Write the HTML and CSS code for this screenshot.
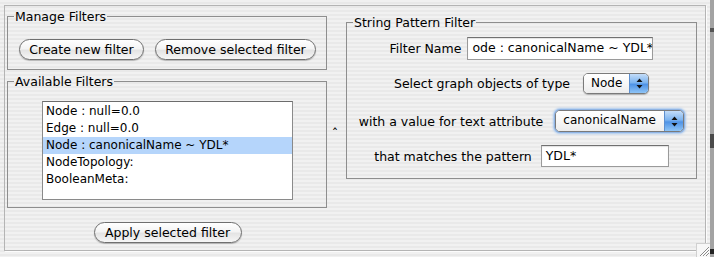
FILE: index.html
```html
<!DOCTYPE html>
<html lang="en">
<head>
  <meta charset="UTF-8">
  <title>Filters</title>
  <link rel="stylesheet" href="styles.css">
</head>
<body>

  <div class="frame">
    <div class="esquerda">
      <fieldset class="grupo grupo-manage">
        <legend>Manage Filters</legend>
        <div class="botoes">
          <button class="pilula">Create new filter</button>
          <button class="pilula">Remove selected filter</button>
        </div>
      </fieldset>

      <fieldset class="grupo grupo-lista">
        <legend>Available Filters</legend>
        <ul class="lista">
          <li>Node : null=0.0</li>
          <li>Edge : null=0.0</li>
          <li class="selecionado">Node : canonicalName ~ YDL*</li>
          <li>NodeTopology:</li>
          <li>BooleanMeta:</li>
        </ul>
      </fieldset>

      <button class="pilula aplicar">Apply selected filter</button>
    </div>

    <div class="divisor"><span class="seta">&#710;</span></div>

    <div class="direita">
      <fieldset class="grupo grupo-padrao">
        <legend>String Pattern Filter</legend>
        <div class="linha linha-nome">
          <span>Filter Name</span>
          <div class="campo campo-nome">ode : canonicalName ~ YDL*</div>
        </div>
        <div class="linha linha-tipo">
          <span>Select graph objects of type</span>
          <div class="combo combo-tipo">
            <span class="combo-texto">Node</span>
            <span class="combo-setas">
              <svg width="7" height="11" viewBox="0 0 7 11"><path d="M3.5 0.5 L6.5 4 L0.5 4 Z M0.5 7 L6.5 7 L3.5 10.5 Z" fill="#111"/></svg>
            </span>
          </div>
        </div>
        <div class="linha linha-atributo">
          <span>with a value for text attribute</span>
          <div class="combo combo-atributo">
            <span class="combo-texto">canonicalName</span>
            <span class="combo-setas">
              <svg width="7" height="11" viewBox="0 0 7 11"><path d="M3.5 0.5 L6.5 4 L0.5 4 Z M0.5 7 L6.5 7 L3.5 10.5 Z" fill="#111"/></svg>
            </span>
          </div>
        </div>
        <div class="linha linha-padrao">
          <span>that matches the pattern</span>
          <div class="campo campo-padrao">YDL*</div>
        </div>
      </fieldset>
    </div>

    <div class="alca">
      <svg width="13" height="13" viewBox="0 0 13 13">
        <path d="M12 3 L3 12 M12 6 L6 12 M12 9 L9 12" stroke="#8a8a8a" stroke-width="1"/>
        <path d="M12 4 L4 12 M12 7 L7 12 M12 10 L10 12" stroke="#fff" stroke-width="1"/>
      </svg>
    </div>
  </div>

  <div class="faixa"></div>

</body>
</html>
```

FILE: styles.css
```css
body {
  margin: 0;
  width: 714px;
  height: 257px;
  display: flex;
  font-family: "DejaVu Sans", "Lucida Grande", sans-serif;
  font-size: 12px;
  color: #000;
  background: repeating-linear-gradient(to bottom, #f1f1f1 0 2px, #e9e9e9 2px 4px);
  overflow: hidden;
}

.frame {
  position: relative;
  flex: 1;
  display: flex;
  margin: 5px 4px 6px 4px;
  border: 1px solid #b4b4b4;
  box-shadow: 1px 1px 0 #fcfcfc;
}

.faixa {
  width: 4px;
  background: linear-gradient(to bottom, #a3a3a3 0 28px, #555 28px 32px, #a3a3a3 32px 134px, #4a4a4a 134px 148px, #a3a3a3 148px 249px, #222 249px 254px, #a3a3a3 254px);
}

/* grupos com titulo */
.grupo {
  margin: 0;
  padding: 0;
  border: 1px solid #8e8e8e;
  min-width: 0;
}

.grupo legend {
  margin-left: 6px;
  padding: 0 1px;
  line-height: 15px;
  font-size: 12.5px;
}

.esquerda {
  width: 320px;
  margin-left: 2px;
  display: flex;
  flex-direction: column;
  align-items: stretch;
}

.grupo-manage {
  margin-top: 3px;
  padding: 15px 0 9px;
}

.botoes {
  display: flex;
  justify-content: center;
  gap: 11px;
  padding-left: 1px;
}

.pilula {
  height: 21px;
  padding: 0;
  font-family: inherit;
  font-size: 12.5px;
  white-space: nowrap;
  color: #000;
  border: 1px solid #6f6f6f;
  border-radius: 11px;
  background: linear-gradient(to bottom, #ffffff 0%, #f4f4f4 45%, #e4e4e4 55%, #f6f6f6 100%);
  box-shadow: 0 1px 1px rgba(0, 0, 0, 0.25);
  line-height: 19px;
}

.grupo-manage .pilula:first-child {
  width: 125px;
}

.grupo-manage .pilula:last-child {
  width: 161px;
}

.grupo-lista {
  margin-top: 4px;
  padding: 12px 0 7px;
}

.lista {
  list-style: none;
  margin: 0 0 0 34px;
  padding: 1px 0 0;
  width: 249px;
  height: 96px;
  background: #fff;
  border: 1px solid #8a8a8a;
  border-top-color: #6c6c6c;
}

.lista li {
  height: 17px;
  line-height: 17px;
  padding-left: 3px;
  white-space: nowrap;
}

.lista .selecionado {
  background: #b5d5fb;
}

.aplicar {
  align-self: center;
  width: 148px;
  margin-top: 14px;
  margin-left: 1px;
}

.divisor {
  width: 19px;
  display: flex;
  align-items: center;
  justify-content: center;
}

.seta {
  font-size: 13px;
  line-height: 8px;
  height: 6px;
  margin-top: 10px;
  margin-left: -3px;
}

.direita {
  width: 351px;
}

.grupo-padrao {
  margin-top: 9px;
  padding: 7px 0 11px;
  display: flex;
  flex-direction: column;
  align-items: center;
}

.linha {
  display: flex;
  align-items: center;
  white-space: nowrap;
  font-size: 12.5px;
}

.linha-nome {
  gap: 6px;
  height: 23px;
}

.linha-tipo {
  gap: 13px;
  height: 21px;
  margin-top: 13px;
}

.linha-atributo {
  gap: 12px;
  height: 22px;
  margin-top: 16px;
}

.linha-padrao {
  gap: 9px;
  height: 22px;
  margin-top: 13px;
}

.campo {
  box-sizing: border-box;
  height: 100%;
  background: #fff;
  border: 1px solid #9a9a9a;
  border-top-color: #707070;
  box-shadow: inset 0 1px 1px rgba(0, 0, 0, 0.12);
  padding-left: 4px;
  line-height: 20px;
  overflow: hidden;
}

.campo-nome {
  width: 186px;
}

.campo-padrao {
  width: 128px;
}

.combo {
  box-sizing: border-box;
  height: 100%;
  display: flex;
  background: #fff;
  border: 1px solid #7a7a7a;
  border-radius: 5px;
  overflow: hidden;
  box-shadow: 0 1px 1px rgba(0, 0, 0, 0.25);
}

.combo-atributo {
  box-shadow: 0 0 0 1px #8fb4e4, 0 0 2px 2px #a9c8ee;
}

.combo-texto {
  flex: 1;
  padding-left: 7px;
  font-size: 12px;
  line-height: 19px;
  background: linear-gradient(to bottom, #ffffff 0%, #f7f7f7 50%, #ececec 100%);
}

.combo-setas {
  width: 18px;
  border-left: 1px solid #5d8fcf;
  display: flex;
  align-items: center;
  justify-content: center;
  background: linear-gradient(to bottom, #c3dcf8 0%, #7db4ef 45%, #4f93e6 55%, #8ec4f6 100%);
}

.combo-tipo {
  width: 66px;
}

.combo-atributo {
  width: 129px;
}

.alca {
  position: absolute;
  right: -5px;
  bottom: -7px;
  width: 13px;
  height: 13px;
  background: #f7f7f7;
  border-top: 1px solid #d0d0d0;
  border-left: 1px solid #d0d0d0;
}
```
